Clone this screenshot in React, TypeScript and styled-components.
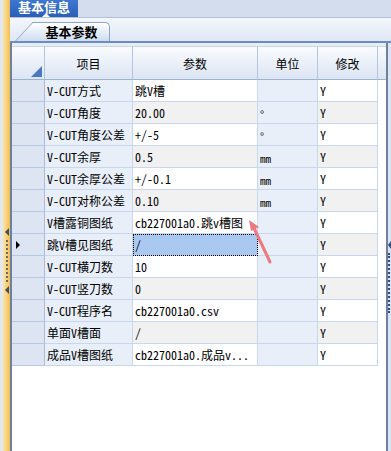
import styled, { createGlobalStyle } from 'styled-components';

const GlobalStyle = createGlobalStyle`
	html, body {
		margin: 0;
		height: 100%;
		overflow: hidden;
		background: #ffffff;
	}
	#root {
		height: 100%;
	}
`;

const gridFont = `"Noto Sans Mono CJK SC", "Noto Sans CJK SC", "Liberation Mono", monospace`;

const Page = styled.div`
	position: relative;
	display: flex;
	height: 100%;
	font-family: ${gridFont};
	font-size: 12px;
	color: #000;
`;

const LeftSplitter = styled.div`
	width: 7px;
	border-left: 3px solid #e2e8f2;
	background: linear-gradient(to right, #fbe6a8, #f6cf73 60%, #efbd5c);
	display: flex;
	flex-direction: column;
	align-items: center;
	padding-top: 228px;
	box-sizing: content-box;
`;

const SplitArrow = styled.div<{ $dir: 'left' | 'right' }>`
	width: 0;
	height: 0;
	border-top: 4px solid transparent;
	border-bottom: 4px solid transparent;
	${(p) =>
		p.$dir === 'left'
			? 'border-right: 4px solid #3e4d6a;'
			: 'border-left: 4px solid #3e4d6a;'}
`;

const SplitDots = styled.div<{ $height: number }>`
	width: 0;
	height: ${(p) => p.$height}px;
	margin: 4px 0;
	border-left: 2px dotted #6a6a6a;
`;

const Main = styled.div`
	flex: 1;
	display: flex;
	flex-direction: column;
	min-width: 0;
`;

const TopBar = styled.div`
	height: 17px;
	background: #d3ddee;
	border-bottom: 1px solid #b3c2da;
	display: flex;
`;

const InfoTab = styled.div`
	position: relative;
	width: 68px;
	height: 17px;
	box-sizing: border-box;
	background: linear-gradient(to bottom, #3f76cf, #2a5fb9);
	color: #fff;
	font-family: "Noto Sans CJK SC", sans-serif;
	font-weight: 700;
	font-size: 13px;
	line-height: 13px;
	text-align: center;

	&::after {
		content: '';
		position: absolute;
		left: 32px;
		bottom: 0;
		border-left: 4px solid transparent;
		border-right: 4px solid transparent;
		border-bottom: 4px solid #ffffff;
	}
`;

const TabStrip = styled.div`
	height: 23px;
	background: linear-gradient(to bottom, #f4f7fc, #dfe7f4);
	border-bottom: 2px solid #6b8cc6;
	display: flex;
	align-items: flex-end;
`;

const ParamTab = styled.div`
	position: relative;
	margin-left: 23px;
	width: 77px;
	height: 19px;
	box-sizing: border-box;
	border: 1px solid #8da5cc;
	border-bottom: none;
	border-radius: 0 5px 0 0;
	background: linear-gradient(to bottom, #ffffff, #cfdcf0);
	font-family: "Noto Sans CJK SC", sans-serif;
	font-weight: 700;
	font-size: 13px;
	line-height: 18px;
	text-align: center;

	&::before {
		content: '';
		position: absolute;
		left: -19px;
		top: -1px;
		bottom: 0;
		width: 26px;
		border-left: 1px solid #8da5cc;
		border-top: 1px solid #8da5cc;
		background: linear-gradient(to bottom, #ffffff, #cfdcf0);
		transform-origin: bottom left;
		transform: skewX(-43deg);
	}

	span {
		position: relative;
	}
`;

const Body = styled.div`
	flex: 1;
	display: flex;
	min-height: 0;
`;

const GridFrame = styled.div`
	flex: 1;
	border-left: 2px solid #6f7f9e;
	border-right: 2px solid #6f7f9e;
	background: #ffffff;
	min-width: 0;
`;

const RightSplitter = styled.div`
	width: 3px;
	background: #dbe4f2;
	display: flex;
	flex-direction: column;
	align-items: flex-end;
	padding-top: 198px;
`;

const RightArrow = styled.div`
	width: 0;
	height: 0;
	border-top: 4px solid transparent;
	border-bottom: 4px solid transparent;
	border-right: 3px solid #2f4a80;
`;

const RightDots = styled.div`
	width: 0;
	height: 60px;
	margin: 4px 1px 0 0;
	border-left: 2px dotted #2f4a80;
`;

const Grid = styled.div`
	display: grid;
	grid-template-columns: 33px 88px 125px 60px 60px 1fr;
	grid-template-rows: 34px;
	grid-auto-rows: 22px;
	border-top: 3px solid #e6edf7;
`;

const HeadCell = styled.div`
	display: flex;
	align-items: center;
	justify-content: center;
	box-sizing: border-box;
	background: linear-gradient(to bottom, #f9fbfe, #dce5f3);
	border-right: 1px solid #b5c5df;
	border-bottom: 1px solid #9fb2d2;
	border-top: 1px solid #c9d5e8;
	font-size: 12px;
`;

const CornerCell = styled(HeadCell)`
	position: relative;

	&::after {
		content: '';
		position: absolute;
		right: 2px;
		bottom: 2px;
		border-left: 11px solid transparent;
		border-bottom: 11px solid #4a78c4;
	}
`;

const HeadFiller = styled(HeadCell)`
	border-right: none;
`;

const RowHead = styled.div`
	box-sizing: border-box;
	background: #dde5f2;
	border-right: 1px solid #a9bcdb;
	border-bottom: 1px solid #b8c8e2;
	display: flex;
	align-items: center;
	padding-left: 4px;
`;

const CurrentMark = styled.div`
	width: 0;
	height: 0;
	border-top: 4px solid transparent;
	border-bottom: 4px solid transparent;
	border-left: 4px solid #000;
`;

type Tone = 'item' | 'value' | 'unit' | 'edit';

const Cell = styled.div<{ $tone: Tone; $alt: boolean; $selected?: boolean }>`
	box-sizing: border-box;
	display: flex;
	align-items: center;
	padding-left: 2px;
	white-space: nowrap;
	overflow: hidden;
	border-right: 1px solid #c9d7ee;
	border-bottom: 1px solid #c9d7ee;
	background: ${(p) =>
		p.$selected
			? '#aac9f1'
			: p.$tone === 'item' || p.$tone === 'unit'
			? '#e8eff9'
			: p.$alt
			? '#f1f1f1'
			: '#ffffff'};
	${(p) => (p.$selected ? 'outline: 1px dotted #000; outline-offset: -1px;' : '')}
	${(p) => (p.$tone === 'unit' ? 'font-size: 11px; padding-top: 3px;' : '')}
`;

const Filler = styled.div`
	background: #ffffff;
`;

const Annotation = styled.svg`
	position: absolute;
	left: 244px;
	top: 214px;
	pointer-events: none;
`;

const rows = [
	{ item: 'V-CUT方式', value: '跳V槽', unit: '' },
	{ item: 'V-CUT角度', value: '20.00', unit: '°' },
	{ item: 'V-CUT角度公差', value: '+/-5', unit: '°' },
	{ item: 'V-CUT余厚', value: '0.5', unit: 'mm' },
	{ item: 'V-CUT余厚公差', value: '+/-0.1', unit: 'mm' },
	{ item: 'V-CUT对称公差', value: '0.10', unit: 'mm' },
	{ item: 'V槽露铜图纸', value: 'cb227001a0.跳v槽图', unit: '' },
	{ item: '跳V槽见图纸', value: '/', unit: '' },
	{ item: 'V-CUT横刀数', value: '10', unit: '' },
	{ item: 'V-CUT竖刀数', value: '0', unit: '' },
	{ item: 'V-CUT程序名', value: 'cb227001a0.csv', unit: '' },
	{ item: '单面V槽面', value: '/', unit: '' },
	{ item: '成品V槽图纸', value: 'cb227001a0.成品v...', unit: '' },
];

const currentRow = 7;

const App = () => {
	return (
		<Page>
			<GlobalStyle />
			<LeftSplitter>
				<SplitArrow $dir="left" />
				<SplitDots $height={42} />
				<SplitArrow $dir="left" />
			</LeftSplitter>
			<Main>
				<TopBar>
					<InfoTab>基本信息</InfoTab>
				</TopBar>
				<TabStrip>
					<ParamTab>
						<span>基本参数</span>
					</ParamTab>
				</TabStrip>
				<Body>
					<GridFrame>
						<Grid>
							<CornerCell />
							<HeadCell>项目</HeadCell>
							<HeadCell>参数</HeadCell>
							<HeadCell>单位</HeadCell>
							<HeadCell>修改</HeadCell>
							<HeadFiller />
							{rows.map((row, i) => {
								const alt = i % 2 === 1;
								return [
									<RowHead key={`h${i}`}>{i === currentRow && <CurrentMark />}</RowHead>,
									<Cell key={`i${i}`} $tone="item" $alt={alt}>
										{row.item}
									</Cell>,
									<Cell key={`v${i}`} $tone="value" $alt={alt} $selected={i === currentRow}>
										{row.value}
									</Cell>,
									<Cell key={`u${i}`} $tone="unit" $alt={alt}>
										{row.unit}
									</Cell>,
									<Cell key={`e${i}`} $tone="edit" $alt={alt}>
										Y
									</Cell>,
									<Filler key={`f${i}`} />,
								];
							})}
						</Grid>
					</GridFrame>
					<RightSplitter>
						<RightArrow />
						<RightDots />
					</RightSplitter>
				</Body>
			</Main>
			<Annotation width="34" height="54" viewBox="0 0 34 54">
				<line x1="26" y1="48" x2="10" y2="14" stroke="#ea7b80" strokeWidth="3" strokeLinecap="round" />
				<polygon points="5,6 15,13 7,17" fill="#ea7b80" />
			</Annotation>
		</Page>
	);
};

export default App;
